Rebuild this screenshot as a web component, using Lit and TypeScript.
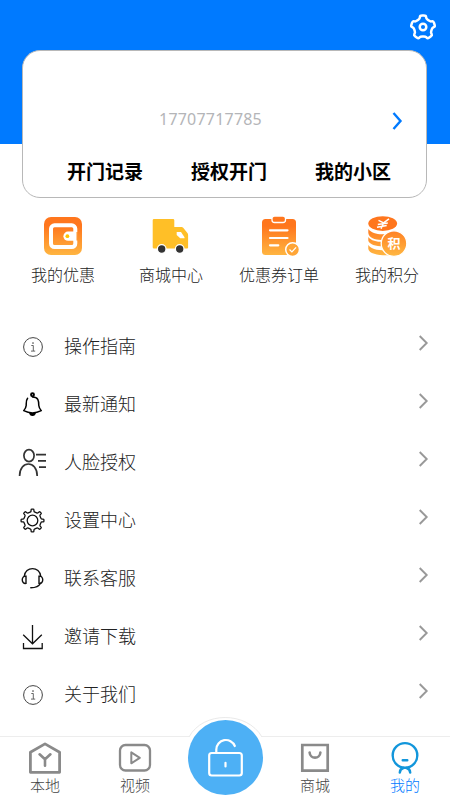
import { LitElement, html, css, svg } from "lit";
import { customElement, property } from "lit/decorators.js";

/** Closed cog outline; `round` (0 to 0.5) is how much of each edge its corners take. */
function cog(cx: number, cy: number, teeth: number, outer: number, inner: number, tip: number, root: number, round: number): string {
  const pts: number[][] = [];
  const step = (Math.PI * 2) / teeth;
  for (let i = 0; i < teeth; i++) {
    const a = -Math.PI / 2 + i * step;
    for (const [r, d] of [[inner, -root], [outer, -tip], [outer, tip], [inner, root]]) {
      pts.push([cx + r * Math.cos(a + d * step), cy + r * Math.sin(a + d * step)]);
    }
  }
  const n = pts.length;
  const mix = (p: number[], q: number[]) =>
    `${(p[0] + (q[0] - p[0]) * round).toFixed(2)} ${(p[1] + (q[1] - p[1]) * round).toFixed(2)}`;
  return pts
    .map((p, i) => `${i ? "L" : "M"}${mix(p, pts[(i + n - 1) % n])}Q${p[0].toFixed(2)} ${p[1].toFixed(2)} ${mix(p, pts[(i + 1) % n])}`)
    .join("") + "Z";
}

const info = svg`
  <circle cx="13" cy="15" r="9.4" stroke="#444" stroke-width="1"/>
  <path d="M11.300 13.500h2v5.500M11 19.100h4.200" stroke="#555" stroke-width=".9"/>
  <circle cx="13" cy="11.100" r=".8" fill="#444"/>`;

const icons: Record<string, unknown> = {
  info,
  bell: svg`<g stroke="#000" stroke-width="1.500" stroke-linejoin="round" stroke-linecap="round">
    <circle cx="12.500" cy="4.800" r="1.500" stroke-width="1.900"/>
    <path d="M7.600 8.300C5.800 10.500 6.300 13 6.200 15.500C6.100 17.600 5 19 3.700 20.700C9 23.400 16 23.400 21.300 20.700C20 19 18.900 17.600 18.800 15.500C18.700 10.500 18.300 6.900 12.500 6.900"/>
    <path d="M9.700 23.600c1 2.600 4.600 2.600 5.600 0z" fill="#000" stroke-width="1.100"/></g>`,
  face: svg`<g stroke="#333" stroke-width="1.700">
    <ellipse cx="9" cy="7.600" rx="5.100" ry="6"/>
    <path d="M-.4 28c0-16 17.600-16 17.600 0M16 6.700h10M18 12.800h8M19 19.200h7"/></g>`,
  cog: svg`<g stroke="#111" stroke-width="1.300" stroke-linejoin="round">
    <path d="${cog(12.5, 14.5, 8, 11.5, 8.8, 0.15, 0.22, 0.25)}"/><circle cx="12.500" cy="14.500" r="5.300"/></g>`,
  headset: svg`<g stroke="#111" stroke-width="1.400" stroke-linecap="round">
    <path d="M4.300 12.300C5 2 20 2 20.700 12.300M20.500 19.200c-1.500 3-5 4.500-9.700 4.600"/>
    <path d="M6 12.200v7.200c-5 .8-5-8 0-7.200zM19 12.200v7.200c5 .8 5-8 0-7.200z"/></g>`,
  download: svg`<path d="M12.500 3v18.500M3.200 12.800l9.300 9 9.300-9M3.500 21v5.500h18.700V21" stroke="#111" stroke-width="1.300"/>`,
};

const features: Record<string, unknown> = {
  wallet: svg`
    <rect x="1" y="1" width="38" height="38" rx="7" fill="url(#g)"/>
    <rect x="8" y="9.300" width="24.300" height="21.700" rx="3.500" stroke="#fff" stroke-width="4"/>
    <path d="M33.300 15.600H25a4.600 4.600 0 0 0 0 9.200h8.300z" fill="#fff"/>
    <path d="M33.500 16h1.500v8.400h-1.500z" fill="#ff9530"/>
    <circle cx="24.400" cy="20.200" r="1.900" fill="#ffc400"/>`,
  truck: svg`
    <path d="M3 3h19q1.300 0 1.300 1.300V11h7.200q1 0 1.700.8l4 5q.9 1.100.9 2.200v12.500q0 1-1 1H3q-1.300 0-1.300-1.300V4.300Q1.700 3 3 3z" fill="#ffbf27"/>
    <path d="M25.700 16h4.300l3.500 5.300v.9h-4.300L25.700 19z" fill="#fff"/>
    <g fill="#333" stroke="#fff" stroke-width="1.200"><circle cx="10.700" cy="33" r="4.300"/><circle cx="28.700" cy="33" r="4.300"/></g>`,
  order: svg`
    <rect x="3" y="3" width="34" height="36" rx="3.500" fill="url(#g)"/>
    <rect x="13" y="0" width="13.500" height="6.500" rx="2.500" fill="#ff761d" stroke="#fff" stroke-width="1.300"/>
    <path d="M11 14.300h17.500M11 22h17.500M11 29.300h8.300" stroke="#fff" stroke-width="2.200" stroke-linecap="round"/>
    <circle cx="33.600" cy="33.600" r="6.900" fill="#ffa536" stroke="#fff" stroke-width="1.500"/>
    <path d="m30.500 33.500 2.400 2.400 4.200-4.500" stroke="#fff" stroke-width="1.300"/>`,
  coins: svg`
    <g fill="url(#g)">
      <path d="M1.300 13c3.700 5.500 15 6.500 21 4v6c-9 2-20 1-21-6z"/>
      <path d="M1.300 21c3.500 5 13 5.500 20 4.500v4.500c-9 1-19-.5-20-5.500z"/>
      <path d="M1.300 29c3.500 5 12 5.500 20 5.500l3 4.500c-10 .8-22-.5-23-6z"/>
    </g>
    <ellipse cx="15.700" cy="7.600" rx="14.400" ry="7.400" fill="#ff761d"/>
    <path d="m11.500 4.300 5.100 2.500 5.400-4M16.600 6.800l-2.500 6M10.800 8.600l10-1.600M10 11.200l9.700-1.700" stroke="#fff" stroke-width="1.500"/>
    <circle cx="27" cy="27.600" r="12.800" fill="url(#g)" stroke="#fff" stroke-width="1.300"/>
    <text x="27" y="32.300" text-anchor="middle" fill="#fff" font-size="13" font-weight="700" font-family="Noto Sans CJK SC, sans-serif">积</text>`,
};

const tabs: Record<string, unknown> = {
  home: svg`<g stroke="#8a8a8a" stroke-width="2.800" stroke-linejoin="round"><path d="M3.400 11.300 18 2.900l14.600 8.400V31.300H3.400z"/>
    <path d="m12.600 13.300 5.400 5 5.400-5M18 18.300v6.400" stroke-width="2.600" stroke-linecap="round"/></g>`,
  video: svg`<g stroke="#8a8a8a" stroke-linejoin="round"><rect x="3" y="4" width="30" height="25.500" rx="5.500" stroke-width="2.300"/>
    <path d="M14.300 11.300v11l8.500-5.500z" stroke-width="2"/></g>`,
  shop: svg`<g stroke="#8a8a8a"><path d="M5.300 4h25.400v25.700H5.300z" stroke-width="2.700"/>
    <path d="M12.600 11.500c.5 6.800 10.300 6.800 10.800 0" stroke-width="2.600" stroke-linecap="round"/></g>`,
  mine: svg`<g stroke="#1296db" stroke-width="2.400" stroke-linecap="round"><circle cx="18" cy="14.400" r="12.300"/>
    <path d="M15.700 19.200h4.600M16.500 27c-2.500.5-3.600 2.500-3.700 4.600M19.500 27c2.500.5 3.600 2.500 3.700 4.600"/></g>`,
};

@customElement("menu-row")
class MenuRow extends LitElement {
  @property() icon = "";
  @property() label = "";
  static styles = css`
    :host { display: flex; align-items: center; height: 58px; padding: 0 21px 0 20px; }
    .icon { width: 28px; height: 30px; fill: none; overflow: visible; margin-top: 2px; }
    .label { flex: 1; margin: -1px 0 0 16px; font-size: 18px; line-height: 26px; }
    .arrow { width: 12px; height: 16px; fill: none; stroke: #999; stroke-width: 1.900; margin-top: -6px; }
  `;
  render() {
    return html`<svg class="icon" viewBox="0 0 28 30">${icons[this.icon]}</svg>
      <span class="label">${this.label}</span>
      <svg class="arrow" viewBox="0 0 12 16"><path d="m2.700 1 7 7-7 7"/></svg>`;
  }
}

@customElement("app-root")
class AppRoot extends LitElement {
  static styles = css`
    :host {
      display: flex; flex-direction: column; position: relative; height: 800px; overflow: hidden;
      background: #fff; color: #222; font-weight: 300;
      font-family: "Noto Sans", "Noto Sans CJK SC", sans-serif;
    }
    svg { display: block; fill: none; }
    .header { box-sizing: border-box; height: 144px; background: #007aff; padding: 12px 12px 0 22px; flex: none; }
    .settings { width: 30px; height: 30px; margin-left: auto; }
    .card {
      box-sizing: border-box; width: 405px; height: 148px; margin-top: 8px; background: #fff;
      border: 1px solid #b8b8b8; border-radius: 18px; display: flex; flex-direction: column; padding-top: 55px;
    }
    .phone { display: grid; grid-template-columns: 1fr auto 1fr; align-items: center; height: 28px; color: #b4b5b8; font-size: 16px; font-weight: 400; padding: 0 22px; }
    .phone span { grid-column: 2; margin: -2px 28px 0 0; letter-spacing: .2px; }
    .go { width: 12px; height: 20px; justify-self: end; margin-top: 1px; }
    .links { display: flex; padding: 0 20px; margin-top: 24px; color: #000; font-size: 19px; line-height: 28px; font-weight: 700; }
    .links span { width: 124px; text-align: center; flex: none; }
    .features { display: flex; padding: 72px 9px 0; height: 101px; }
    .feature { width: 108px; display: flex; flex-direction: column; align-items: center; font-size: 16px; line-height: 24px; gap: 7px; }
    .feature svg { width: 40px; height: 40px; overflow: visible; }
    .bar { position: absolute; left: 0; right: 0; bottom: 0; height: 63px; display: flex; background: #fff; box-shadow: 0 -1px 0 #ededed; }
    .tab { width: 90px; display: flex; flex-direction: column; align-items: center; font-size: 15px; line-height: 20px; color: #444; padding-top: 4px; }
    .tab svg { width: 36px; height: 34px; }
    .active { color: #007aff; }
    .lock { position: absolute; left: 184px; top: -21px; width: 82px; height: 84px; }
  `;
  render() {
    return html`
      <div class="header">
        <svg class="settings" viewBox="0 0 30 30"><g stroke="#fff" stroke-width="2.500" stroke-linejoin="round">
          <path d="${cog(15, 15.4, 5, 12.2, 9.3, 0.19, 0.29, 0.35)}"/><circle cx="15" cy="15" r="3.300"/></g></svg>
        <div class="card">
          <div class="phone"><span>17707717785</span>
            <svg class="go" viewBox="0 0 12 20"><path d="m1.500 2 7 8-7 8" stroke="#007aff" stroke-width="2.400"/></svg></div>
          <div class="links"><span>开门记录</span><span>授权开门</span><span>我的小区</span></div>
        </div>
      </div>
      <div class="features">
        ${[["wallet", "我的优惠"], ["truck", "商城中心"], ["order", "优惠券订单"], ["coins", "我的积分"]].map(
          ([k, t]) => html`<div class="feature"><svg viewBox="0 0 40 40">
            <defs><linearGradient id="g" gradientUnits="userSpaceOnUse" x1="0" y1="10" x2="0" y2="39">
              <stop stop-color="#ff761d"/><stop offset="1" stop-color="#ffb541"/></linearGradient></defs>${features[k]}</svg>
            <span>${t}</span></div>`)}
      </div>
      ${[["info", "操作指南"], ["bell", "最新通知"], ["face", "人脸授权"], ["cog", "设置中心"], ["headset", "联系客服"], ["download", "邀请下载"], ["info", "关于我们"]].map(
        ([k, t]) => html`<menu-row icon=${k} label=${t}></menu-row>`)}
      <div class="bar">
        ${[["home", "本地"], ["video", "视频"], ["", ""], ["shop", "商城"], ["mine", "我的"]].map(
          ([k, t]) => html`<div class="tab ${k === "mine" ? "active" : ""}">${k ? html`<svg viewBox="0 0 36 34">${tabs[k]}</svg><span>${t}</span>` : ""}</div>`)}
        <svg class="lock" viewBox="0 0 82 84">
          <path d="M5 21C19-5 63-5 78 21" fill="#fff" stroke="#eaeaea"/>
          <circle cx="41.500" cy="41.500" r="37.500" fill="#4db0f5"/>
          <g stroke="#fff" stroke-width="2.200" stroke-linecap="round">
            <rect x="25.200" y="37" width="32.600" height="22.500" rx="2.500"/>
            <path d="M32.300 37v-3.500a9.600 9.600 0 0 1 18.500-3.500M41.500 46.800v3.600"/></g>
        </svg>
      </div>`;
  }
}
